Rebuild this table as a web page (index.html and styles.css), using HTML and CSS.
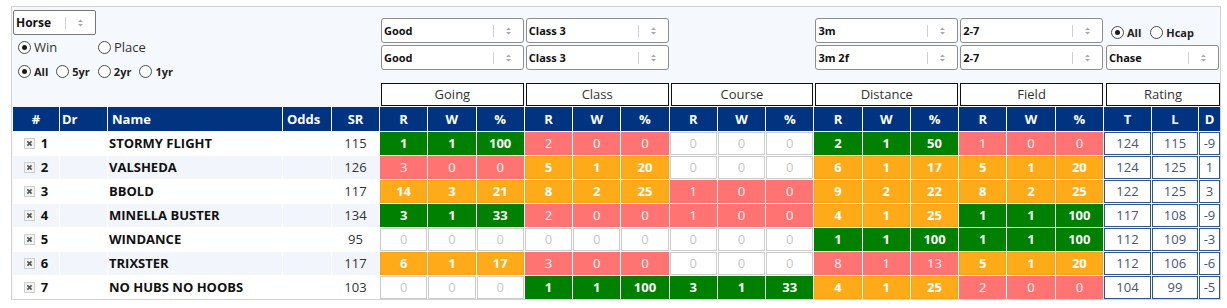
FILE: index.html
```html
<!DOCTYPE html>
<html>
<head>
<meta charset="utf-8">
<link rel="stylesheet" href="styles.css">
</head>
<body>
<div class="panel">
  <div class="controls cols">
    <div class="left">
      <div class="sel sel-horse"><span class="val">Horse</span><span class="sep"></span><span class="arr"><svg width="7" height="10" viewBox="0 0 7 10"><path d="M1 4 L3.5 1.5 L6 4Z M1 6 L3.5 8.5 L6 6Z" fill="#aaa"/></svg></span></div>
      <div class="radio-row">
        <span class="opt wide"><span class="radio on"></span><span class="lbl">Win</span></span>
        <span class="opt"><span class="radio"></span><span class="lbl">Place</span></span>
      </div>
      <div class="radio-row">
        <span class="opt"><span class="radio on"></span><span class="lbl b">All</span></span>
        <span class="opt"><span class="radio"></span><span class="lbl b">5yr</span></span>
        <span class="opt"><span class="radio"></span><span class="lbl b">2yr</span></span>
        <span class="opt"><span class="radio"></span><span class="lbl b">1yr</span></span>
      </div>
    </div>

    <div class="sel g-going r1"><span class="val">Good</span><span class="sep"></span><span class="arr"><svg width="7" height="10" viewBox="0 0 7 10"><path d="M1 4 L3.5 1.5 L6 4Z M1 6 L3.5 8.5 L6 6Z" fill="#aaa"/></svg></span></div>
    <div class="sel g-going r2"><span class="val">Good</span><span class="sep"></span><span class="arr"><svg width="7" height="10" viewBox="0 0 7 10"><path d="M1 4 L3.5 1.5 L6 4Z M1 6 L3.5 8.5 L6 6Z" fill="#aaa"/></svg></span></div>
    <div class="sel g-class r1"><span class="val">Class 3</span><span class="sep"></span><span class="arr"><svg width="7" height="10" viewBox="0 0 7 10"><path d="M1 4 L3.5 1.5 L6 4Z M1 6 L3.5 8.5 L6 6Z" fill="#aaa"/></svg></span></div>
    <div class="sel g-class r2"><span class="val">Class 3</span><span class="sep"></span><span class="arr"><svg width="7" height="10" viewBox="0 0 7 10"><path d="M1 4 L3.5 1.5 L6 4Z M1 6 L3.5 8.5 L6 6Z" fill="#aaa"/></svg></span></div>
    <div class="sel g-dist r1"><span class="val">3m</span><span class="sep"></span><span class="arr"><svg width="7" height="10" viewBox="0 0 7 10"><path d="M1 4 L3.5 1.5 L6 4Z M1 6 L3.5 8.5 L6 6Z" fill="#aaa"/></svg></span></div>
    <div class="sel g-dist r2"><span class="val">3m 2f</span><span class="sep"></span><span class="arr"><svg width="7" height="10" viewBox="0 0 7 10"><path d="M1 4 L3.5 1.5 L6 4Z M1 6 L3.5 8.5 L6 6Z" fill="#aaa"/></svg></span></div>
    <div class="sel g-field r1"><span class="val">2-7</span><span class="sep"></span><span class="arr"><svg width="7" height="10" viewBox="0 0 7 10"><path d="M1 4 L3.5 1.5 L6 4Z M1 6 L3.5 8.5 L6 6Z" fill="#aaa"/></svg></span></div>
    <div class="sel g-field r2"><span class="val">2-7</span><span class="sep"></span><span class="arr"><svg width="7" height="10" viewBox="0 0 7 10"><path d="M1 4 L3.5 1.5 L6 4Z M1 6 L3.5 8.5 L6 6Z" fill="#aaa"/></svg></span></div>
    <div class="rate-radios g-rating r1">
      <span class="opt"><span class="radio on"></span><span class="lbl b">All</span></span>
      <span class="opt"><span class="radio"></span><span class="lbl b">Hcap</span></span>
    </div>
    <div class="sel g-rating r2"><span class="val">Chase</span><span class="sep"></span><span class="arr"><svg width="7" height="10" viewBox="0 0 7 10"><path d="M1 4 L3.5 1.5 L6 4Z M1 6 L3.5 8.5 L6 6Z" fill="#aaa"/></svg></span></div>

    <div class="grp g-going">Going</div>
    <div class="grp g-class">Class</div>
    <div class="grp g-course">Course</div>
    <div class="grp g-dist">Distance</div>
    <div class="grp g-field">Field</div>
    <div class="grp g-rating">Rating</div>
  </div>

  <div class="table cols">
    <div class="h c">#</div><div class="h l">Dr</div><div class="h l pad">Name</div><div class="h l pad">Odds</div><div class="h c">SR</div>
    <div class="h c">R</div><div class="h c">W</div><div class="h c">%</div>
    <div class="h c">R</div><div class="h c">W</div><div class="h c">%</div>
    <div class="h c">R</div><div class="h c">W</div><div class="h c">%</div>
    <div class="h c">R</div><div class="h c">W</div><div class="h c">%</div>
    <div class="h c">R</div><div class="h c">W</div><div class="h c">%</div>
    <div class="h c">T</div><div class="h c">L</div><div class="h c">D</div>

    <div class="row">
      <div class="d num"><svg class="x" width="11" height="11" viewBox="0 0 11 11"><rect x="0.5" y="0.5" width="10" height="10" fill="#f3f3f3" stroke="#cfcfcf"/><path d="M3.4 3.4 L7.6 7.6 M7.6 3.4 L3.4 7.6" stroke="#555" stroke-width="1.6"/></svg>1</div>
      <div class="d"></div><div class="d name">STORMY FLIGHT</div><div class="d"></div><div class="d sr">115</div>
      <div class="v g">1</div><div class="v g">1</div><div class="v g">100</div>
      <div class="v p">2</div><div class="v p">0</div><div class="v p">0</div>
      <div class="v z">0</div><div class="v z">0</div><div class="v z">0</div>
      <div class="v g">2</div><div class="v g">1</div><div class="v g">50</div>
      <div class="v p">1</div><div class="v p">0</div><div class="v p">0</div>
      <div class="v rt">124</div><div class="v rt">115</div><div class="v rt">-9</div>
    </div>
    <div class="row alt">
      <div class="d num"><svg class="x" width="11" height="11" viewBox="0 0 11 11"><rect x="0.5" y="0.5" width="10" height="10" fill="#f3f3f3" stroke="#cfcfcf"/><path d="M3.4 3.4 L7.6 7.6 M7.6 3.4 L3.4 7.6" stroke="#555" stroke-width="1.6"/></svg>2</div>
      <div class="d"></div><div class="d name">VALSHEDA</div><div class="d"></div><div class="d sr">126</div>
      <div class="v p">3</div><div class="v p">0</div><div class="v p">0</div>
      <div class="v o">5</div><div class="v o">1</div><div class="v o">20</div>
      <div class="v z">0</div><div class="v z">0</div><div class="v z">0</div>
      <div class="v o">6</div><div class="v o">1</div><div class="v o">17</div>
      <div class="v o">5</div><div class="v o">1</div><div class="v o">20</div>
      <div class="v rt">124</div><div class="v rt">125</div><div class="v rt">1</div>
    </div>
    <div class="row">
      <div class="d num"><svg class="x" width="11" height="11" viewBox="0 0 11 11"><rect x="0.5" y="0.5" width="10" height="10" fill="#f3f3f3" stroke="#cfcfcf"/><path d="M3.4 3.4 L7.6 7.6 M7.6 3.4 L3.4 7.6" stroke="#555" stroke-width="1.6"/></svg>3</div>
      <div class="d"></div><div class="d name">BBOLD</div><div class="d"></div><div class="d sr">117</div>
      <div class="v o">14</div><div class="v o">3</div><div class="v o">21</div>
      <div class="v o">8</div><div class="v o">2</div><div class="v o">25</div>
      <div class="v p">1</div><div class="v p">0</div><div class="v p">0</div>
      <div class="v o">9</div><div class="v o">2</div><div class="v o">22</div>
      <div class="v o">8</div><div class="v o">2</div><div class="v o">25</div>
      <div class="v rt">122</div><div class="v rt">125</div><div class="v rt">3</div>
    </div>
    <div class="row alt">
      <div class="d num"><svg class="x" width="11" height="11" viewBox="0 0 11 11"><rect x="0.5" y="0.5" width="10" height="10" fill="#f3f3f3" stroke="#cfcfcf"/><path d="M3.4 3.4 L7.6 7.6 M7.6 3.4 L3.4 7.6" stroke="#555" stroke-width="1.6"/></svg>4</div>
      <div class="d"></div><div class="d name">MINELLA BUSTER</div><div class="d"></div><div class="d sr">134</div>
      <div class="v g">3</div><div class="v g">1</div><div class="v g">33</div>
      <div class="v p">2</div><div class="v p">0</div><div class="v p">0</div>
      <div class="v p">1</div><div class="v p">0</div><div class="v p">0</div>
      <div class="v o">4</div><div class="v o">1</div><div class="v o">25</div>
      <div class="v g">1</div><div class="v g">1</div><div class="v g">100</div>
      <div class="v rt">117</div><div class="v rt">108</div><div class="v rt">-9</div>
    </div>
    <div class="row">
      <div class="d num"><svg class="x" width="11" height="11" viewBox="0 0 11 11"><rect x="0.5" y="0.5" width="10" height="10" fill="#f3f3f3" stroke="#cfcfcf"/><path d="M3.4 3.4 L7.6 7.6 M7.6 3.4 L3.4 7.6" stroke="#555" stroke-width="1.6"/></svg>5</div>
      <div class="d"></div><div class="d name">WINDANCE</div><div class="d"></div><div class="d sr">95</div>
      <div class="v z">0</div><div class="v z">0</div><div class="v z">0</div>
      <div class="v z">0</div><div class="v z">0</div><div class="v z">0</div>
      <div class="v z">0</div><div class="v z">0</div><div class="v z">0</div>
      <div class="v g">1</div><div class="v g">1</div><div class="v g">100</div>
      <div class="v g">1</div><div class="v g">1</div><div class="v g">100</div>
      <div class="v rt">112</div><div class="v rt">109</div><div class="v rt">-3</div>
    </div>
    <div class="row alt">
      <div class="d num"><svg class="x" width="11" height="11" viewBox="0 0 11 11"><rect x="0.5" y="0.5" width="10" height="10" fill="#f3f3f3" stroke="#cfcfcf"/><path d="M3.4 3.4 L7.6 7.6 M7.6 3.4 L3.4 7.6" stroke="#555" stroke-width="1.6"/></svg>6</div>
      <div class="d"></div><div class="d name">TRIXSTER</div><div class="d"></div><div class="d sr">117</div>
      <div class="v o">6</div><div class="v o">1</div><div class="v o">17</div>
      <div class="v p">3</div><div class="v p">0</div><div class="v p">0</div>
      <div class="v z">0</div><div class="v z">0</div><div class="v z">0</div>
      <div class="v p">8</div><div class="v p">1</div><div class="v p">13</div>
      <div class="v o">5</div><div class="v o">1</div><div class="v o">20</div>
      <div class="v rt">112</div><div class="v rt">106</div><div class="v rt">-6</div>
    </div>
    <div class="row">
      <div class="d num"><svg class="x" width="11" height="11" viewBox="0 0 11 11"><rect x="0.5" y="0.5" width="10" height="10" fill="#f3f3f3" stroke="#cfcfcf"/><path d="M3.4 3.4 L7.6 7.6 M7.6 3.4 L3.4 7.6" stroke="#555" stroke-width="1.6"/></svg>7</div>
      <div class="d"></div><div class="d name">NO HUBS NO HOOBS</div><div class="d"></div><div class="d sr">103</div>
      <div class="v z">0</div><div class="v z">0</div><div class="v z">0</div>
      <div class="v g">1</div><div class="v g">1</div><div class="v g">100</div>
      <div class="v g">3</div><div class="v g">1</div><div class="v g">33</div>
      <div class="v o">4</div><div class="v o">1</div><div class="v o">25</div>
      <div class="v p">2</div><div class="v p">0</div><div class="v p">0</div>
      <div class="v rt">104</div><div class="v rt">99</div><div class="v rt">-5</div>
    </div>
  </div>
</div>
</body>
</html>
```

FILE: styles.css
```css
* { box-sizing: border-box; }
body {
  margin: 0;
  background: #fff;
  font-family: "Open Sans", "Noto Sans", sans-serif;
  color: #222;
}
.panel {
  margin: 6px 0 0 11px;
  width: 1210px;
  border: 1px solid #d2d2d2;
  background: #f5f8fd;
  padding: 3px 0 0 1px;
}
.cols {
  display: grid;
  grid-template-columns: 46px 47px 174px 48px 47px repeat(15, 47.27px) 47px 46px 1fr;
  column-gap: 1px;
}

/* controls */
.controls {
  grid-template-rows: 8px 25px 2px 25px 13px 23px;
}
.left {
  grid-column: 1 / 6;
  grid-row: 1 / 6;
  display: flex;
  flex-direction: column;
}
.radio-row {
  height: 24px;
  display: flex;
  align-items: center;
  padding-left: 5px;
  gap: 8px;
}
.opt {
  display: inline-flex;
  align-items: center;
  gap: 3px;
  white-space: nowrap;
}
.opt.wide { width: 72px; }
.radio {
  width: 13px;
  height: 13px;
  border-radius: 50%;
  border: 1px solid #4a4a4a;
  background: #fff;
  display: inline-flex;
  align-items: center;
  justify-content: center;
}
.radio.on::after {
  content: "";
  width: 5px;
  height: 5px;
  border-radius: 50%;
  background: #1a1a1a;
}
.lbl { font-size: 13px; color: #333; }
.lbl.b { font-size: 11px; font-weight: 700; color: #222; }

.sel {
  display: flex;
  align-items: center;
  height: 25px;
  border: 1px solid #8d8d8d;
  border-radius: 3px;
  background: #fff;
  padding-left: 2px;
  margin-left: 1px;
}
.sel .val {
  flex: 1;
  font-size: 11px;
  font-weight: 700;
  color: #111;
  white-space: nowrap;
}
.sel .sep {
  width: 1px;
  height: 12px;
  background: #d0d0d0;
}
.sel .arr {
  width: 29px;
  display: flex;
  justify-content: center;
  align-items: center;
}
.sel-horse {
  width: 83px;
  margin-left: 0;
  border-color: #777;
  border-radius: 2px;
}
.sel-horse .val { font-size: 12px; }

.r1 { grid-row: 2; }
.r2 { grid-row: 4; }
.g-going { grid-column: 6 / 9; }
.g-class { grid-column: 9 / 12; }
.g-course { grid-column: 12 / 15; }
.g-dist { grid-column: 15 / 18; }
.g-field { grid-column: 18 / 21; }
.g-rating { grid-column: 21 / 24; margin-left: 2px; }
.sel.g-rating { margin-right: 1px; }

.rate-radios {
  display: flex;
  align-items: center;
  gap: 9px;
  padding: 3px 0 0 5px;
}

.grp {
  grid-row: 6;
  margin-left: 1px;
  background: #fff;
  border: 1px solid #111;
  font-size: 13px;
  color: #333;
  text-align: center;
  line-height: 21px;
}
.grp.g-rating { margin-left: 2px; }

/* table */
.table {
  margin-top: 1px;
  background: #fff;
  grid-template-rows: 24px repeat(7, 23px);
  row-gap: 1px;
}
.row { display: contents; }
.h {
  background: #003380;
  color: #fff;
  font-weight: 700;
  font-size: 13px;
  line-height: 24px;
}
.h.c { text-align: center; }
.h.l { padding-left: 2px; }
.h.l.pad { padding-left: 4px; }

.d {
  background: #fff;
  font-size: 13px;
  line-height: 23px;
  white-space: nowrap;
}
.row.alt .d { background: #f2f5fb; }
.num {
  display: flex;
  align-items: center;
  justify-content: center;
  gap: 6px;
  font-weight: 700;
  color: #111;
}
.name { font-weight: 700; color: #111; padding-left: 1px; }
.sr { text-align: center; color: #333; }

.v {
  font-size: 13px;
  line-height: 23px;
  text-align: center;
  overflow: hidden;
  white-space: nowrap;
}
.g { background: #008000; color: #fff; font-weight: 700; }
.o { background: #ffab19; color: #fff; font-weight: 700; border: 1px solid #f7a414; line-height: 21px; }
.p { background: #ff7373; color: #fff; }
.z { background: #fff; color: #c8c8c8; border: 1px solid #cdcdcd; line-height: 21px; }
.rt { background: #fff; color: #45557f; border: 1px solid #2b5690; line-height: 21px; }
```
